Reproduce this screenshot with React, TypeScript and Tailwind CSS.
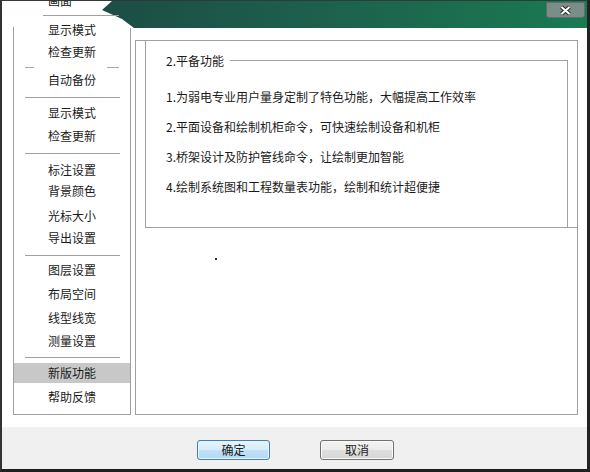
type MenuRow =
  | { kind: 'item'; label: string; cls: string; active?: boolean }
  | { kind: 'sep'; cls: string }
  | { kind: 'broken'; cls: string }

// popup menu rows, spacing taken from the screenshot
const menuRows: MenuRow[] = [
  { kind: 'item', label: '画面', cls: '-mt-[9px]' },
  { kind: 'sep', cls: 'mt-[4px] ml-[29px] w-[76px]' },
  { kind: 'item', label: '显示模式', cls: 'mt-[4px]' },
  { kind: 'item', label: '检查更新', cls: 'mt-[2px]' },
  { kind: 'broken', cls: 'mt-[5px]' },
  { kind: 'item', label: '自动备份', cls: 'mt-[2px]' },
  { kind: 'sep', cls: 'mt-[7px] ml-[11px] w-[95px]' },
  { kind: 'item', label: '显示模式', cls: 'mt-[5px]' },
  { kind: 'item', label: '检查更新', cls: 'mt-[3px]' },
  { kind: 'sep', cls: 'mt-[7px] ml-[11px] w-[95px]' },
  { kind: 'item', label: '标注设置', cls: 'mt-[6px]' },
  { kind: 'item', label: '背景颜色', cls: 'mt-[1px]' },
  { kind: 'item', label: '光标大小', cls: 'mt-[5px]' },
  { kind: 'item', label: '导出设置', cls: 'mt-[2px]' },
  { kind: 'sep', cls: 'mt-[7px] ml-[11px] w-[95px]' },
  { kind: 'item', label: '图层设置', cls: 'mt-[4px]' },
  { kind: 'item', label: '布局空间', cls: 'mt-[4px]' },
  { kind: 'item', label: '线型线宽', cls: 'mt-[4px]' },
  { kind: 'item', label: '测量设置', cls: 'mt-[3px]' },
  { kind: 'sep', cls: 'mt-[6px] ml-[11px] w-[95px]' },
  { kind: 'item', label: '新版功能', cls: 'mt-[5px]', active: true },
  { kind: 'item', label: '帮助反馈', cls: 'mt-[4px]' },
]

const features = [
  '1.为弱电专业用户量身定制了特色功能，大幅提高工作效率',
  '2.平面设备和绘制机柜命令，可快速绘制设备和机柜',
  '3.桥架设计及防护管线命令，让绘制更加智能',
  '4.绘制系统图和工程数量表功能，绘制和统计超便捷',
]

function PopupMenu() {
  return (
    <div className="absolute -top-px left-[11px] w-[118px] h-[415px] flex border-b border-[#a0a0a0] bg-[linear-gradient(to_bottom,transparent_28px,#ffffff_28px)]">
      <div className="w-px bg-[linear-gradient(to_bottom,transparent_27px,#a0a0a0_27px)]" />
      <div className="flex-1 min-w-0 flex flex-col">
        {menuRows.map((row, i) => {
          if (row.kind === 'sep') {
            return <div key={i} className={`h-px shrink-0 bg-[#a0a0a0] ${row.cls}`} />
          }
          if (row.kind === 'broken') {
            return (
              <div key={i} className={`h-px shrink-0 flex ${row.cls}`}>
                <div className="ml-[11px] w-[9px] bg-[#a8a8a8]" />
                <div className="ml-[73px] w-[12px] bg-[#a8a8a8]" />
              </div>
            )
          }
          return (
            <div
              key={i}
              className={`h-[20px] shrink-0 leading-[20px] pl-[34px] whitespace-nowrap ${row.cls} ${
                row.active ? 'bg-[#c8c8c8]' : ''
              }`}
            >
              {row.label}
            </div>
          )
        })}
      </div>
      <div className="w-px bg-[linear-gradient(to_bottom,transparent_28px,#a0a0a0_28px)]" />
    </div>
  )
}

export default function App() {
  return (
    <div className="relative w-[590px] h-[472px] overflow-hidden flex flex-col bg-white border-t border-t-[#2e3b37] border-l-2 border-l-[#333333] border-r-[3px] border-r-[#222222] border-b-[3px] border-b-[#1f1f1f] font-['Noto_Sans_CJK_SC','Noto_Sans',sans-serif] text-[12px] text-[#1a1a1a]">
      {/* title bar */}
      <div className="relative h-[27px] shrink-0 flex justify-end bg-[linear-gradient(to_right,#1c4540,#1d5b4b_45%,#1a7a52)]">
        <div className="absolute left-0 top-0 h-full w-[140px] bg-white [clip-path:polygon(0_0,110px_0,100px_9px,120px_18px,132px_27px,0_27px)]" />
        <div className="mr-[2px] mt-px w-[39px] h-[16px] rounded-b-[3px] bg-[#7b8d88] border border-[#5f706b] flex items-center justify-center">
          <svg width="13" height="11" viewBox="0 0 13 11">
            <path d="M2.5 2 L10.5 9 M10.5 2 L2.5 9" stroke="#2a2a2a" strokeWidth="4" fill="none" />
            <path d="M2.5 2 L10.5 9 M10.5 2 L2.5 9" stroke="#ffffff" strokeWidth="2" fill="none" />
          </svg>
        </div>
      </div>

      {/* body */}
      <div className="flex-1 pt-[12px] pl-[133px]">
        <div className="w-[443px] h-[375px] border border-[#a0a0a0] flex flex-col">
          <div className="ml-[9px] h-[187px] shrink-0 border-l border-b border-[#a0a0a0] flex flex-col">
            <div className="mt-[13px] mr-[9px] flex-1 flex flex-col">
              <div className="flex h-[13px]">
                <span className="pl-[20px] pr-[6px] leading-[13px] whitespace-nowrap">2.平备功能</span>
                <div className="flex-1 mt-[6px] border-t border-r border-[#a0a0a0]" />
              </div>
              <div className="flex-1 border-r border-[#a0a0a0] pl-[20px] pt-[15px]">
                {features.map((f) => (
                  <div key={f} className="h-[30px] leading-[30px] whitespace-nowrap">
                    {f}
                  </div>
                ))}
              </div>
            </div>
          </div>
          <div className="mt-[30px] ml-[79px] w-[2px] h-[2px] bg-[#333333]" />
        </div>
      </div>

      {/* footer */}
      <div className="h-[42px] shrink-0 bg-[#f0f0f0] flex items-start pt-[13px] pl-[195px]">
        <button className="w-[73px] h-[20px] rounded-[3px] border border-[#3c7fb1] bg-[linear-gradient(to_bottom,#e6f4fc,#d5ecfa_50%,#c2e2f7_50%,#b2d8f2)] shadow-[inset_0_0_0_1px_#e8f5fd] flex items-center justify-center leading-none">
          确定
        </button>
        <button className="ml-[50px] w-[74px] h-[20px] rounded-[3px] border border-[#707070] bg-[linear-gradient(to_bottom,#f4f4f4,#ebebeb_50%,#dfdfdf_50%,#d6d6d6)] shadow-[inset_0_0_0_1px_#fbfbfb] flex items-center justify-center leading-none">
          取消
        </button>
      </div>

      <PopupMenu />
    </div>
  )
}
